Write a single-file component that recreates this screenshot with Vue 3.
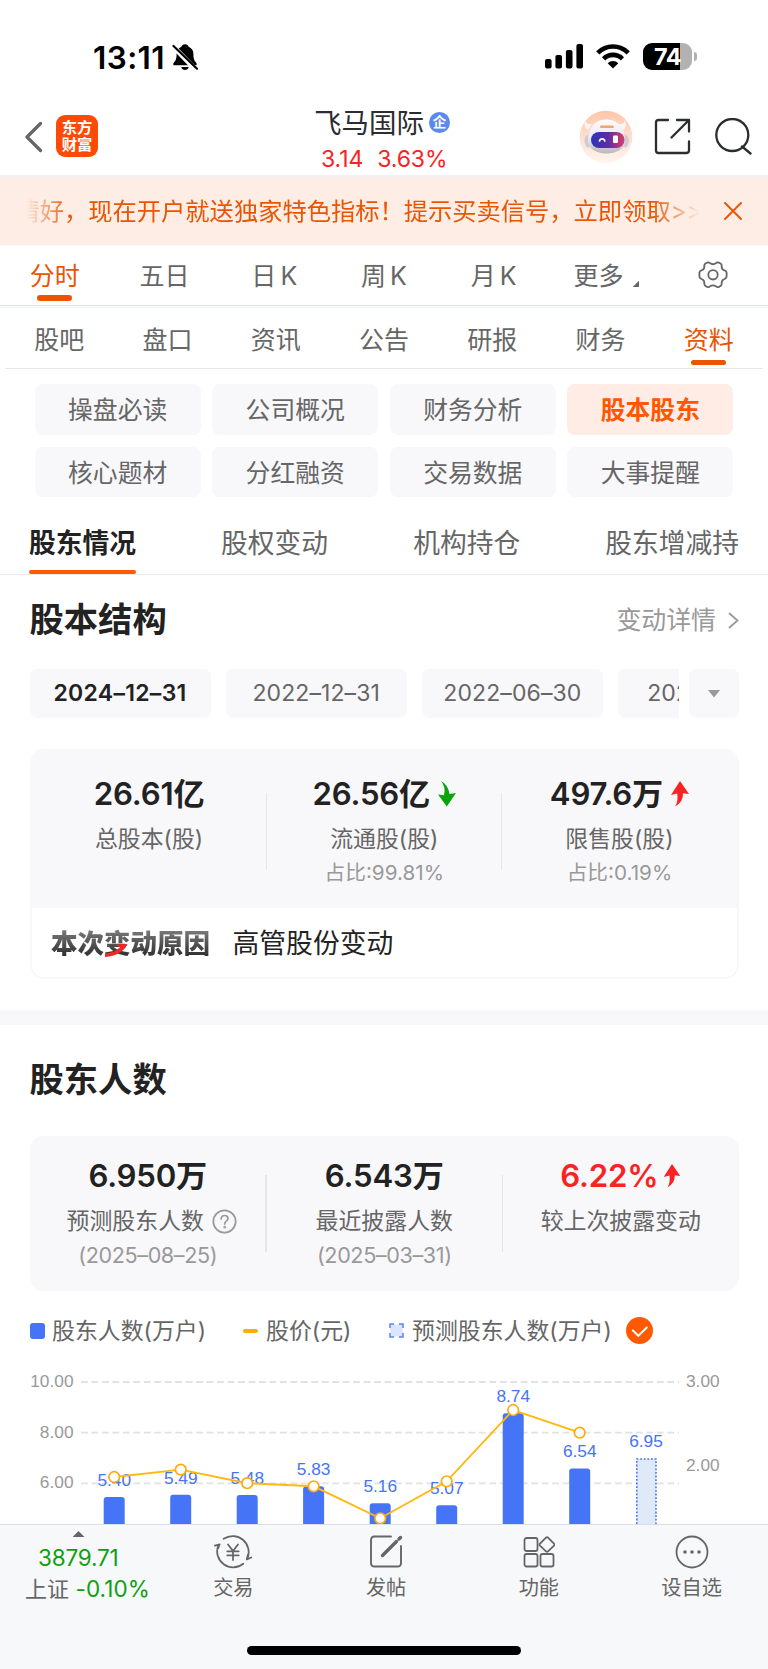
<script setup>
const periodTabs = [
  { label: '分时', active: true },
  { label: '五日' },
  { label: '日 K' },
  { label: '周 K' },
  { label: '月 K' },
]
const infoTabs = ['股吧', '盘口', '资讯', '公告', '研报', '财务', '资料']
const topics = ['操盘必读', '公司概况', '财务分析', '股本股东', '核心题材', '分红融资', '交易数据', '大事提醒']
const holderTabs = ['股东情况', '股权变动', '机构持仓', '股东增减持']
const dates = ['2024–12–31', '2022–12–31', '2022–06–30', '2021–12–31']

const gridLines = [
  { y: 32, label: '10.00' },
  { y: 82.7, label: '8.00' },
  { y: 133.3, label: '6.00' },
]
const rightTicks = [
  { y: 32, label: '3.00' },
  { y: 116, label: '2.00' },
]
const bars = [
  { x: 114.2, top: 147, label: '5.40', ly: 136 },
  { x: 180.7, top: 144.8, label: '5.49', ly: 133.7 },
  { x: 247.2, top: 145, label: '5.48', ly: 133.8 },
  { x: 313.6, top: 136.3, label: '5.83', ly: 125 },
  { x: 380.2, top: 153.2, label: '5.16', ly: 142 },
  { x: 446.7, top: 155.3, label: '5.07', ly: 144.3 },
  { x: 513.2, top: 63.2, label: '8.74', ly: 52.3 },
  { x: 579.7, top: 118.5, label: '6.54', ly: 106.500 },
]
const prices = [127, 119.6, 133.2, 136.3, 168.3, 131.3, 60, 82.7]
const pricePoints = bars.map((b, i) => ({ x: b.x, y: prices[i] }))
const priceLine = pricePoints.map((p) => `${p.x},${p.y}`).join(' ')
</script>

<template>
  <div class="page">
    <div class="status">
      <div class="clock">13:11</div>
      <svg class="bell" width="26" height="28" viewBox="0 0 26 28">
        <path d="M13 1.2c-1.9 0-3.2 1.1-3.6 2.6C6.300 5 4.600 7.600 4.600 11c0 5.300-1.100 6.900-2.600 8.400-1.300 1.300-.900 2.900.700 2.900h20.600c1.600 0 2-1.600.700-2.900-1.500-1.500-2.600-3.100-2.600-8.400 0-3.400-1.700-6-4.800-7.200C16.200 2.300 14.900 1.200 13 1.200zM9.300 24h7.400c-.4 1.800-1.800 3-3.700 3s-3.300-1.200-3.700-3z" />
        <path d="M.5 2.700 24 27" stroke="#fff" stroke-width="5" />
        <path d="M1.500 3 25 25.700" stroke="#000" stroke-width="2.200" stroke-linecap="round" />
      </svg>
      <svg class="signal" width="38" height="25" viewBox="0 0 38 25">
        <rect x="0" y="15" width="6.600" height="9.500" rx="2" />
        <rect x="10.400" y="11" width="6.600" height="13.500" rx="2" />
        <rect x="20.900" y="6" width="6.600" height="18.500" rx="2" />
        <rect x="31.400" y="0" width="6.600" height="24.500" rx="2" />
      </svg>
      <svg class="wifi" width="34" height="25" viewBox="0 0 34 25">
        <path d="M1.800 8.800a21.500 21.500 0 0 1 30.400 0" fill="none" stroke="#000" stroke-width="4.600" />
        <path d="M7.600 14.800a13.300 13.300 0 0 1 18.800 0" fill="none" stroke="#000" stroke-width="4.600" />
        <path d="M17 24.500l-5.300-5.300a7.500 7.500 0 0 1 10.600 0z" />
      </svg>
      <div class="battery"><span>74</span></div>
      <div class="nub"></div>
    </div>

    <header class="header">
      <svg class="back" width="18" height="32" viewBox="0 0 18 32" fill="none" stroke="#666" stroke-width="3.200" stroke-linecap="round" stroke-linejoin="round">
        <path d="M15.500 2.500 2 16l13.500 13.500" />
      </svg>
      <div class="logo"><span>东方</span><span>财富</span></div>
      <div class="stock">
        <div class="name">飞马国际<i>企</i></div>
        <div class="quote"><span>3.14</span><span>3.63%</span></div>
      </div>
      <svg class="robot" width="54" height="54" viewBox="0 0 54 54">
        <defs>
          <linearGradient id="halo" x1="0" y1="0" x2="0" y2="1">
            <stop offset="0" stop-color="#ffc6aa" />
            <stop offset="1" stop-color="#fff6f1" />
          </linearGradient>
          <linearGradient id="shell" x1="0" y1="0" x2="0" y2="1">
            <stop offset="0" stop-color="#fdfbfb" />
            <stop offset=".6" stop-color="#e9e7ec" />
            <stop offset="1" stop-color="#b9b4c0" />
          </linearGradient>
          <linearGradient id="visor" x1="0" y1="0" x2="1" y2="0">
            <stop offset="0" stop-color="#2f35b4" />
            <stop offset=".5" stop-color="#5a2ba8" />
            <stop offset="1" stop-color="#dc3f66" />
          </linearGradient>
        </defs>
        <circle cx="27" cy="27" r="26.300" fill="url(#halo)" />
        <path d="M6 10c1 3.500 3 5 7 4l-4 6c-3-2-4.500-6-3-10zM46 10c-.5 3-2 4.500-6 4l4 6c3-2 3.800-6 2-10z" fill="#fbf6f4" />
        <ellipse cx="9.500" cy="31" rx="4" ry="6.500" fill="#cfccd6" />
        <ellipse cx="46" cy="31" rx="4" ry="6.500" fill="#cfccd6" />
        <path d="M27 9.500c-8 0-14 4.500-16.500 11.500C7.500 30 9 37 15 40.500c7 4 18 4 25 0 6-3.500 7-10.500 4.500-19C42 14 35.500 9.500 27 9.500z" fill="url(#shell)" />
        <rect x="21" y="15.500" width="14" height="2.600" rx="1.300" fill="#eda66c" />
        <rect x="12" y="22" width="33.500" height="16" rx="8" fill="url(#visor)" />
        <path d="M20.500 31c.7-2.800 4.600-2.800 5.300 0" fill="none" stroke="#fff" stroke-width="1.700" stroke-linecap="round" />
        <rect x="34" y="25.500" width="5" height="7.500" rx="1.200" fill="#fff" />
      </svg>
      <svg class="share" width="37" height="37" viewBox="0 0 37 37" fill="none" stroke="#2b2d30" stroke-width="2.300" stroke-linecap="round" stroke-linejoin="round">
        <path d="M14 2H4.500Q2 2 2 4.500v28Q2 35 4.500 35H32q3 0 3-2.500V23.500M17.500 19.500 35 2M23 2h12v11.500" />
      </svg>
      <svg class="search" width="38" height="38" viewBox="0 0 38 38" fill="none" stroke="#2b2d30" stroke-width="2.300" stroke-linecap="round">
        <circle cx="18.300" cy="17" r="16" />
        <path d="M28 28.500 36.500 35.500" />
      </svg>
    </header>

    <div class="banner">
      <div class="marquee"><span>情好，现在开户就送独家特色指标！提示买卖信号，立即领取&gt;&gt;</span></div>
      <svg class="close" width="18" height="18" viewBox="0 0 18 18" fill="none" stroke="#ea5504" stroke-width="1.900" stroke-linecap="round">
        <path d="M1 1l16 16M17 1 1 17" />
      </svg>
    </div>

    <nav class="periods">
      <div v-for="t in periodTabs" :key="t.label" class="tab" :class="{ on: t.active }">{{ t.label }}</div>
      <div class="tab more">更多<i></i></div>
      <div class="tab gear">
        <svg width="30" height="28" viewBox="0 0 30 28" fill="none" stroke="#666" stroke-width="1.800" stroke-linejoin="round">
          <path d="M9.200 1.600Q11 1 12 2.300Q15 4.200 18 2.300Q19 1 20.800 1.600L22.800 2.800Q24 3.800 23.600 5.400Q23.600 8.300 26.500 9.300Q28.200 9.800 28.600 11.500V15.500Q28.200 17.400 26.500 18Q23.600 19 23.600 22Q24 23.700 22.800 24.700L20.800 26Q19 26.600 18 25.300Q15 23.500 12 25.300Q11 26.600 9.200 26L7.200 24.700Q6 23.700 6.400 22Q6.400 19 3.500 18Q1.800 17.400 1.400 15.500V11.500Q1.800 9.800 3.500 9.300Q6.400 8.300 6.400 5.400Q6 3.800 7.200 2.800Z" />
          <circle cx="15" cy="13.800" r="4.700" />
        </svg>
      </div>
    </nav>

    <nav class="infos">
      <div v-for="(t, i) in infoTabs" :key="t" class="tab" :class="{ on: i === 6 }">{{ t }}</div>
    </nav>

    <div class="topics">
      <div v-for="(t, i) in topics" :key="t" class="topic" :class="{ on: i === 3 }">{{ t }}</div>
    </div>

    <nav class="holders">
      <div v-for="(t, i) in holderTabs" :key="t" class="htab" :class="{ on: i === 0 }">{{ t }}</div>
    </nav>

    <section class="structure">
      <div class="heading">
        <h2>股本结构</h2>
        <div class="link">
          变动详情
          <svg width="11" height="17" viewBox="0 0 11 17" fill="none" stroke="#999" stroke-width="1.800" stroke-linecap="round">
            <path d="M1.500 1.500 9.500 8.500 1.500 15.500" />
          </svg>
        </div>
      </div>
      <div class="dates">
        <div class="strip">
          <div v-for="(d, i) in dates" :key="d" class="date" :class="{ on: i === 0 }">{{ d }}</div>
        </div>
        <div class="drop"><i></i></div>
      </div>
      <div class="card framed">
        <div class="stats tall">
          <div class="stat">
            <div class="value">26.61亿</div>
            <div class="label">总股本(股)</div>
          </div>
          <div class="stat">
            <div class="value">
              26.56亿
              <svg width="18" height="26" viewBox="0 0 18 26"><path d="M3 0Q10 3.500 11.500 13L18 12 8.800 25.500 0 13.500l6 .7Q8 6 3 0z" fill="#0aa30a" /></svg>
            </div>
            <div class="label">流通股(股)</div>
            <div class="note">占比:99.81%</div>
          </div>
          <div class="stat">
            <div class="value">
              497.6万
              <svg width="18" height="26" viewBox="0 0 18 26"><path d="M9 0l9 13-6-.7Q12.500 21 4 25.500 7.500 20 6.200 12.500L0 14z" fill="#f92323" /></svg>
            </div>
            <div class="label">限售股(股)</div>
            <div class="note">占比:0.19%</div>
          </div>
        </div>
        <div class="reason">
          <div class="tag">
            本次变动原因
            <svg width="24" height="14" viewBox="0 0 24 14"><path d="M0 9.500Q11 8.500 15 3.500L11 .5 22.500 0Q16 12 0 13z" fill="#f92323" /></svg>
          </div>
          <div class="cause">高管股份变动</div>
        </div>
      </div>
    </section>

    <div class="gap"></div>

    <section class="count">
      <div class="heading"><h2>股东人数</h2></div>
      <div class="card">
        <div class="stats">
          <div class="stat">
            <div class="value">6.950万</div>
            <div class="label help">预测股东人数
              <svg width="25" height="25" viewBox="0 0 25 25" fill="none" stroke="#999" stroke-width="1.700" stroke-linecap="round">
                <circle cx="12.500" cy="12.500" r="11.200" />
                <path d="M9.200 10c0-4.600 6.800-4.600 6.800-.4 0 2.500-3.300 2.700-3.300 5.300" />
                <circle cx="12.700" cy="18.200" r=".5" />
              </svg>
            </div>
            <div class="note big">(2025–08–25)</div>
          </div>
          <div class="stat">
            <div class="value">6.543万</div>
            <div class="label">最近披露人数</div>
            <div class="note big">(2025–03–31)</div>
          </div>
          <div class="stat">
            <div class="value red">6.22%<svg width="18" height="24" viewBox="0 0 18 26"><path d="M9 0l9 13-6-.7Q12.500 21 4 25.500 7.500 20 6.200 12.500L0 14z" fill="#f92323" /></svg></div>
            <div class="label">较上次披露变动</div>
          </div>
        </div>
      </div>

      <div class="legend">
        <i class="sq"></i><span class="l1">股东人数(万户)</span>
        <i class="dash"></i><span class="l2">股价(元)</span>
        <svg class="box" width="15" height="15" viewBox="0 0 15 15">
          <rect x="1" y="1" width="13" height="13" fill="#dbe5fd" />
          <path d="M5 1H1v4M10 1h4v4M14 10v4h-4M5 14H1v-4" stroke="#5b84f7" stroke-width="1.500" fill="none" />
          <path d="M6.500 .5h2v1.500h-2zM6.500 13h2v1.500h-2zM.2 6.500h1.500v2H.2zM13.300 6.500h1.500v2h-1.500z" fill="#fff" />
        </svg>
        <span class="l3">预测股东人数(万户)</span>
        <svg width="27" height="27" viewBox="0 0 27 27">
          <circle cx="13.500" cy="13.500" r="13.500" fill="#ff5a00" />
          <path d="M6.700 13.300 12.300 18.800 20.800 10.500" fill="none" stroke="#fff" stroke-width="1.900" stroke-linecap="round" />
        </svg>
      </div>

      <svg class="chart" width="768" height="174" viewBox="0 0 768 174">
        <g v-for="g in gridLines" :key="g.label">
          <line x1="81" x2="679" :y1="g.y" :y2="g.y" stroke="#e2e2e2" stroke-width="1.800" stroke-dasharray="6.800 3.670" />
          <text x="73.500" :y="g.y + 5" text-anchor="end" class="tick">{{ g.label }}</text>
        </g>
        <text v-for="t in rightTicks" :key="t.label" x="686" :y="t.y + 5" class="tick">{{ t.label }}</text>
        <path v-for="b in bars" :key="b.x" :d="`M${b.x - 10.500} 174V${b.top + 3}q0-3 3-3h15q3 0 3 3V174z`" fill="#4674f6" />
        <path d="M636.800 174V109h19.200v65" fill="#dfeaf9" stroke="#4674f6" stroke-width="1.600" stroke-dasharray="1.800 1.800" />
        <text v-for="b in bars" :key="b.label" :x="b.x" :y="b.ly" text-anchor="middle" class="num">{{ b.label }}</text>
        <text x="646" y="96.500" text-anchor="middle" class="num">6.95</text>
        <polyline :points="priceLine" fill="none" stroke="#ffb810" stroke-width="1.900" />
        <circle v-for="p in pricePoints" :key="p.x" :cx="p.x" :cy="p.y" r="5.300" fill="#fff" stroke="#ffab0a" stroke-width="1.700" />
      </svg>
    </section>

    <footer class="bottom">
      <div class="bar">
        <div class="index">
          <i></i>
          <div class="idx">3879.71</div>
          <div class="chg"><em>上证</em> -0.10%</div>
        </div>
        <div class="act">
          <svg width="38" height="34" viewBox="0 0 38 34" fill="none" stroke="#666" stroke-width="1.800" stroke-linecap="round" stroke-linejoin="round">
            <path d="M9.700 3.800A16 16 0 0 1 33.300 23.500M29.300 28.800A16 16 0 0 1 4.300 10.500" />
            <path d="M.9 10.700 5.600 9.300 4.300 13M37.300 22.500 32.800 24.300 33.900 20" />
            <path d="M14 9.500l5 6.500 5-6.500M13.300 16.300h11.400M13.300 20.300h11.400M19 16.300V25" />
          </svg>
          <span>交易</span>
        </div>
        <div class="act">
          <svg width="34" height="34" viewBox="0 0 34 34" fill="none" stroke="#666" stroke-width="1.900" stroke-linecap="round">
            <path d="M22 1.500H5.500Q2 1.500 2 5v23q0 3.500 3.500 3.500h23Q32 31.500 32 28V11" />
            <path d="M13.500 20.500 27.500 6.500M30 4l1.500-1.500" stroke-width="3.400" />
          </svg>
          <span>发帖</span>
        </div>
        <div class="act">
          <svg width="32" height="34" viewBox="0 0 32 34" fill="none" stroke="#666" stroke-width="1.800" stroke-linejoin="round">
            <rect x="1.500" y="3" width="13" height="13" rx="2" />
            <rect x="1.500" y="19" width="13" height="12.500" rx="2" />
            <rect x="17.500" y="19" width="13" height="12.500" rx="2" />
            <path d="M23 2.700q1-1 2 0l6 6q1 1 0 2l-6 5.600q-1 1-2 0l-6-5.600q-1-1 0-2z" />
          </svg>
          <span>功能</span>
        </div>
        <div class="act">
          <svg width="34" height="34" viewBox="0 0 34 34">
            <circle cx="17" cy="17" r="15.500" fill="none" stroke="#666" stroke-width="1.800" />
            <g fill="#666"><circle cx="10" cy="17" r="1.800" /><circle cx="17" cy="17" r="1.800" /><circle cx="24" cy="17" r="1.800" /></g>
          </svg>
          <span>设自选</span>
        </div>
      </div>
      <div class="home"></div>
    </footer>
  </div>
</template>

<style>
body {
  margin: 0;
  background: #fff;
}
</style>

<style scoped>
* {
  box-sizing: border-box;
}
i,
em {
  font-style: normal;
}
.page {
  width: 768px;
  height: 1669px;
  overflow: hidden;
  display: flex;
  flex-direction: column;
  background: #fff;
  color: #666;
  font-family: Inter, 'Noto Sans CJK SC', sans-serif;
}
.page > * {
  flex-shrink: 0;
}
svg {
  display: block;
  flex-shrink: 0;
}

.status {
  height: 100px;
  padding: 43px 71px 0 93px;
  display: flex;
  align-items: flex-start;
}
.clock {
  width: 79px;
  font-size: 31.5px;
  font-weight: 600;
  line-height: 29px;
  color: #000;
  letter-spacing: 0.4px;
}
.bell {
  margin-right: auto;
}
.signal {
  margin: 1px 13px 0 0;
}
.wifi {
  margin: 1px 13px 0 0;
}
.battery {
  width: 49px;
  height: 27px;
  border-radius: 9px;
  background: linear-gradient(90deg, #000 37px, #b2b2b2 37px);
  color: #fff;
  font-size: 23.5px;
  font-weight: 700;
  line-height: 27px;
  text-align: center;
  letter-spacing: -0.5px;
}
.nub {
  width: 3px;
  height: 9px;
  margin: 9px 0 0 2px;
  border-radius: 0 5px 5px 0;
  background: #b2b2b2;
}

.header {
  height: 77px;
  border-bottom: 2px solid #eef0f3;
  display: flex;
  align-items: flex-start;
}
.back {
  margin: 21px 0 0 25px;
}
.logo {
  width: 42px;
  height: 42px;
  margin: 15px 0 0 13px;
  padding-top: 4px;
  border-radius: 9px;
  background: #ff4a06;
  color: #fff;
  font-size: 15.3px;
  font-weight: 700;
  line-height: 17px;
  text-align: center;
  display: flex;
  flex-direction: column;
}
.stock {
  margin: 7.500px 0 0 216px;
  width: 140px;
}
.name {
  height: 30px;
  font-size: 27.5px;
  line-height: 30px;
  color: #2b2d30;
  display: flex;
  align-items: center;
}
.name i {
  width: 21px;
  height: 21px;
  margin-left: 5px;
  border-radius: 50%;
  background: #5c89ee;
  color: #fff;
  font-size: 13.5px;
  font-weight: 700;
  line-height: 21px;
  text-align: center;
}
.quote {
  margin-top: 7px;
  padding-left: 7px;
  display: flex;
  gap: 14px;
  font-size: 23px;
  line-height: 28px;
  color: #f92323;
  letter-spacing: -0.1px;
}
.robot {
  margin: 10px 0 0 125px;
}
.share {
  margin: 18px 0 0 21px;
}
.search {
  margin: 18px 0 0 23px;
}

.banner {
  height: 68px;
  background: #fdede4;
  display: flex;
  align-items: center;
}
.marquee {
  width: 674px;
  margin-left: 26px;
  overflow: hidden;
  white-space: nowrap;
  font-size: 24.27px;
  line-height: 40px;
  color: #ea5504;
  mask-image: linear-gradient(90deg, transparent 0, #000 44px, #000 626px, transparent 674px);
}
.marquee span {
  margin-left: -10.500px;
}
.close {
  margin-left: 24px;
}

.tab {
  position: relative;
  display: flex;
  align-items: center;
  justify-content: center;
  font-size: 25px;
}
.tab.on {
  color: #ea5504;
}
.tab.on::after {
  content: '';
  position: absolute;
  left: 50%;
  margin-left: -17.5px;
  width: 35px;
  height: 5.5px;
  border-radius: 3px;
  background: #ea5504;
}
.periods {
  height: 63px;
  display: grid;
  grid-template-columns: repeat(7, 1fr);
  padding-bottom: 4.500px;
  border-bottom: 1px solid #eef0f3;
  background: linear-gradient(#dcdfe3, #dcdfe3) 0 60px / 100% 1px no-repeat;
}
.periods .tab {
  word-spacing: -3px;
}
.periods .tab.on::after {
  bottom: 2px;
}
.gear {
  padding-top: 2px;
}
.more i {
  width: 7px;
  height: 7px;
  margin: 20px 0 0 9px;
  background: #666;
  clip-path: polygon(100% 0, 100% 100%, 0 100%);
}
.more {
  padding-left: 6px;
}
.infos {
  height: 61px;
  margin: 0 5px;
  display: grid;
  grid-template-columns: repeat(7, 1fr);
  border-bottom: 1px solid #e6e7e9;
}
.infos .tab {
  padding-bottom: 1px;
}
.infos .tab.on::after {
  bottom: 3px;
}

.topics {
  margin: 15px 34.7px 0;
  display: grid;
  grid-template-columns: repeat(4, 1fr);
  gap: 12px 11.7px;
}
.topic {
  height: 50.5px;
  border-radius: 8px;
  background: #f8f8fb;
  font-size: 24.8px;
  line-height: 53px;
  text-align: center;
}
.topic.on {
  background: #ffece5;
  color: #ff5600;
  font-weight: 700;
}

.holders {
  height: 78px;
  padding: 0 29px;
  display: flex;
  justify-content: space-between;
  border-bottom: 1px solid #ebebed;
}
.htab {
  position: relative;
  font-size: 26.75px;
  line-height: 92px;
}
.htab.on {
  color: #222;
  font-weight: 700;
}
.htab.on::after {
  content: '';
  position: absolute;
  left: 0;
  right: 0;
  bottom: 0.5px;
  height: 4px;
  border-radius: 2px;
  background: #ff5a00;
}

.structure {
  height: 434.500px;
  padding: 0 29px 0 29.500px;
}
.heading {
  height: 92px;
  padding-bottom: 2px;
  display: flex;
  justify-content: space-between;
  align-items: center;
}
h2 {
  margin: 0;
  font-size: 34.3px;
  line-height: 40px;
  font-weight: 700;
  color: #222;
}
.link {
  display: flex;
  align-items: center;
  gap: 12px;
  font-size: 24.9px;
  line-height: 40px;
  color: #999;
}
.dates {
  margin-top: 2px;
  display: flex;
  justify-content: space-between;
}
.strip {
  width: 649px;
  overflow: hidden;
  display: flex;
  gap: 15.2px;
}
.date {
  flex: 0 0 181px;
  height: 49px;
  border-radius: 7px;
  background: #f8f8fb;
  font-size: 23px;
  line-height: 48px;
  text-align: center;
  letter-spacing: 0.1px;
}
.date.on {
  color: #222;
  font-weight: 600;
  letter-spacing: 0.3px;
}
.drop {
  width: 50px;
  height: 49px;
  border-radius: 7px;
  background: #f8f8fb;
  display: flex;
  align-items: center;
  justify-content: center;
}
.drop i {
  width: 13px;
  height: 8px;
  background: #999;
  clip-path: polygon(0 0, 100% 0, 50% 100%);
}

.card {
  border-radius: 14px;
  background: #f8f8fb;
  overflow: hidden;
}
.framed {
  margin-top: 31px;
  height: 229.500px;
  border: 2px solid #f8f8fb;
  background: #fff;
}
.stats {
  height: 154.500px;
  padding-top: 22px;
  display: flex;
  background: #f8f8fb;
}
.stats.tall {
  height: 157px;
  padding-top: 25px;
}
.stat {
  position: relative;
  flex: 1;
  text-align: center;
}
.stat + .stat::before {
  content: '';
  position: absolute;
  left: -1px;
  top: 17px;
  width: 1.500px;
  height: 77px;
  background: #e6e6e9;
}
.value {
  height: 36px;
  display: flex;
  justify-content: center;
  align-items: center;
  gap: 8px;
  font-size: 31.2px;
  font-weight: 600;
  line-height: 36px;
  color: #222;
  letter-spacing: -0.2px;
}
.value.red {
  color: #f92323;
  gap: 5px;
}
.label {
  margin-top: 12px;
  font-size: 22.9px;
  line-height: 30px;
}
.help {
  display: flex;
  justify-content: center;
  align-items: center;
  gap: 8px;
  padding-left: 8px;
}
.note {
  margin-top: 5px;
  font-size: 20.7px;
  line-height: 28px;
  color: #999;
}
.note.big {
  font-size: 21.6px;
  letter-spacing: -0.4px;
}
.reason {
  height: 68px;
  padding: 2px 0 0 19.500px;
  display: flex;
  align-items: center;
}
.tag {
  position: relative;
  font-size: 26.5px;
  font-weight: 900;
  line-height: 34px;
  background: linear-gradient(#777 15%, #333 85%);
  background-clip: text;
  color: transparent;
}
.tag svg {
  position: absolute;
  left: 53.5px;
  top: 18px;
}
.cause {
  margin-left: 22.5px;
  font-size: 26.8px;
  line-height: 34px;
  color: #222;
}
.gap {
  height: 15px;
  background: #f8f8fb;
}

.count {
  height: 499.500px;
}
.count .heading {
  padding: 0 29.5px;
  height: 111.500px;
}
.count .card {
  margin: 0 29px 0 29.500px;
}
.legend {
  height: 59px;
  padding: 21px 0 0 29.5px;
  display: flex;
  align-items: center;
  font-size: 22.9px;
  line-height: 30px;
}
.sq {
  width: 15px;
  height: 16px;
  border-radius: 3px;
  background: #4674f6;
}
.l1 {
  width: 191px;
  margin-left: 7.5px;
}
.dash {
  width: 15px;
  height: 4px;
  border-radius: 2px;
  background: #ffab0a;
}
.l2 {
  width: 123px;
  margin-left: 8px;
}
.l3 {
  width: 214px;
  margin-left: 8px;
}
.chart {
  font-family: 'Liberation Sans', Arial, sans-serif;
  font-size: 17.3px;
}
.tick {
  fill: #999;
}
.num {
  fill: #4674f6;
}

.bottom {
  height: 145px;
  border-top: 1px solid #dcdfe6;
  background: #f7f8fa;
}
.bar {
  height: 121px;
  display: flex;
}
.index {
  width: 157px;
  padding-left: 25px;
  white-space: nowrap;
  font-size: 22.5px;
  color: #0fa00f;
}
.index i {
  display: block;
  width: 12px;
  height: 6px;
  margin: 6px 0 0 47.5px;
  background: #666;
  clip-path: polygon(50% 0, 100% 100%, 0 100%);
}
.idx {
  margin: 7px 0 0 13px;
  line-height: 28px;
  letter-spacing: -0.2px;
}
.chg {
  margin-top: 2px;
  line-height: 29px;
  letter-spacing: 0.1px;
}
.chg em {
  color: #666;
  font-size: 22px;
  letter-spacing: 0;
}
.act {
  flex: 1;
  padding-top: 9.500px;
  display: flex;
  flex-direction: column;
  align-items: center;
  font-size: 20.2px;
  line-height: 30px;
}
.act span {
  margin-top: 4px;
}
.home {
  width: 274px;
  height: 9px;
  margin: 0 auto;
  border-radius: 5px;
  background: #000;
}
</style>
